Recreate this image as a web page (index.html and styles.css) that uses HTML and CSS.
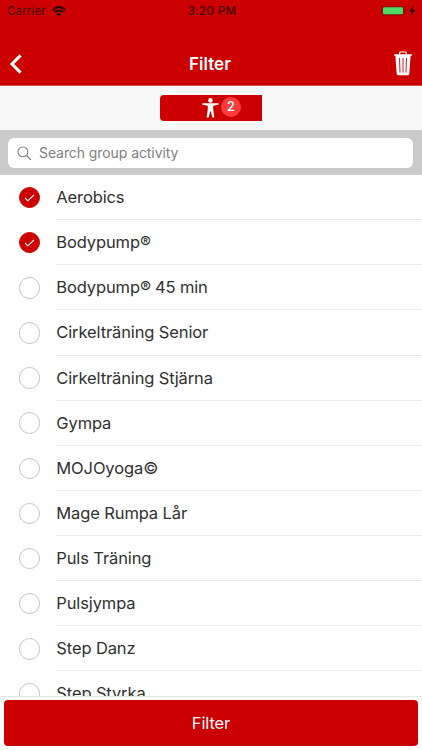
FILE: index.html
```html
<!DOCTYPE html>
<html lang="sv">
<head>
<meta charset="utf-8">
<title>Filter</title>
<link rel="stylesheet" href="styles.css">
</head>
<body>
<div class="app">
  <header class="header">
    <div class="status">
      <div class="carrier"><span>Carrier</span>
        <svg class="wifi" width="14" height="11" viewBox="0 0 14 11"><path d="M.8 4Q7-2 13.2 4M3 6.300Q7 2.600 11 6.300" fill="none" stroke="currentColor" stroke-width="1.900"/><path d="M4.700 8.100Q7 6 9.300 8.100L7 10.500Z" fill="currentColor"/></svg>
      </div>
      <time class="clock">3:20 PM</time>
      <svg class="battery" width="36" height="12" viewBox="0 0 36 12"><rect x=".5" y="1" width="23" height="9.600" rx="2.200" fill="#8b0d04"/><rect x="2" y="2.300" width="20" height="7" rx="1" fill="#4cd964"/><path d="M24.600 4.200Q26 5.800 24.600 7.400Z" fill="#700"/><path d="M32.300.7 28.500 6.500H31L30 10.800 34.300 4.900H31.600Z" fill="#210000"/></svg>
    </div>
    <nav class="nav">
      <svg class="back" width="14" height="22" viewBox="0 0 14 22"><path d="M11.600 2.400 3 11 11.600 19.600" fill="none" stroke="#fff" stroke-width="3"/></svg>
      <h1>Filter</h1>
      <svg class="trash" width="18" height="25" viewBox="0 0 18 25"><path d="M5.600 3.500V2Q5.600 1 6.600 1H11.400Q12.400 1 12.400 2V3.500" fill="none" stroke="#fff" stroke-width="1.200"/><path d="M.2 3.300H17.800V4.700H16.600L15.300 23Q15.200 24.300 13.800 24.300H4.200Q2.800 24.300 2.700 23L1.400 4.700H.2Z" fill="#fff"/><path d="M5.500 7 6 21.500M9 7V21.500M12.500 7 12 21.500" stroke="#c00" stroke-width=".9"/></svg>
    </nav>
  </header>
  <section class="segments">
    <div class="segment">
      <svg width="17" height="20" viewBox="0 0 17 20"><circle cx="8.500" cy="2.400" r="2.300" fill="#fff"/><path d="M.4 5.200H16.600V6.800L11.200 7.700V11L12.400 19.400H10.300L8.900 13.500H8.100L6.700 19.400H4.600L5.800 11V7.700L.4 6.800Z" fill="#fff"/></svg>
      <span class="badge">2</span>
    </div>
  </section>
  <section class="search">
    <div class="field">
      <svg width="15" height="15" viewBox="0 0 15 15"><circle cx="5.900" cy="5.900" r="4.900" fill="none" stroke="#808080" stroke-width="1.100"/><path d="M9.500 9.500 13.900 13.900" stroke="#808080" stroke-width="1.300"/></svg>
      <span>Search group activity</span>
    </div>
  </section>
  <ul class="list">
    <li><i class="check on"><svg width="11" height="8" viewBox="0 0 11 8"><path d="M1 4 3.800 6.800 10 1" fill="none" stroke="#fff" stroke-width="1.100"/></svg></i><span>Aerobics</span></li>
    <li><i class="check on"><svg width="11" height="8" viewBox="0 0 11 8"><path d="M1 4 3.800 6.800 10 1" fill="none" stroke="#fff" stroke-width="1.100"/></svg></i><span>Bodypump<b class="reg">®</b></span></li>
    <li><i class="check"></i><span>Bodypump<b class="reg">®</b> 45 min</span></li>
    <li><i class="check"></i><span>Cirkelträning Senior</span></li>
    <li><i class="check"></i><span>Cirkelträning Stjärna</span></li>
    <li><i class="check"></i><span>Gympa</span></li>
    <li><i class="check"></i><span>MOJOyoga<b class="copy">©</b></span></li>
    <li><i class="check"></i><span>Mage Rumpa Lår</span></li>
    <li><i class="check"></i><span>Puls Träning</span></li>
    <li><i class="check"></i><span>Pulsjympa</span></li>
    <li><i class="check"></i><span>Step Danz</span></li>
    <li><i class="check"></i><span>Step Styrka</span></li>
  </ul>
  <footer class="footer"><div class="apply">Filter</div></footer>
</div>
</body>
</html>
```
FILE: styles.css
```css
* { box-sizing: border-box; }
body { margin: 0; font-family: Inter, "Liberation Sans", sans-serif; color: #303030; background: #fff; }
svg { display: block; flex: none; }
.app { width: 422px; height: 750px; display: flex; flex-direction: column; overflow: hidden; }
.header { flex: none; height: 86px; background: #c00; border-bottom: 1px solid #d6504e; }
.status { height: 22px; padding: 0 5px 0 7px; display: grid; grid-template-columns: 1fr auto 1fr; align-items: center; color: #3b0000; font-size: 11.5px; }
.carrier { display: flex; align-items: center; gap: 6px; letter-spacing: .15px; }
.wifi { color: #210000; }
.clock { font-weight: 500; letter-spacing: .35px; }
.battery { justify-self: end; }
.nav { height: 63px; padding: 20px 10px 0 8px; display: grid; grid-template-columns: 1fr auto 1fr; align-items: center; }
.back { margin-left: 1px; }
.nav h1 { margin: 0; color: #fff; font-size: 17px; font-weight: 600; letter-spacing: 0; line-height: 22px; }
.trash { justify-self: end; }
.segments { flex: none; height: 44px; background: #f8f8f8; display: flex; justify-content: center; align-items: center; }
.segment { width: 102px; height: 26px; border-radius: 4px 0 0 4px; background: #c00; display: flex; justify-content: center; align-items: center; gap: 2px; padding-left: 21px; }
.badge { width: 20px; height: 20px; margin-top: -3px; border-radius: 50%; background: #fa3c3c; color: #fff; font-size: 12.5px; font-weight: 600; line-height: 20px; text-align: center; }
.search { flex: none; height: 45px; padding: 8px 9px 7px 8px; background: #cacaca; }
.field { height: 30px; border-radius: 6px; background: #fff; display: flex; align-items: center; gap: 7px; padding: 0 9px; color: #808080; font-size: 14px; letter-spacing: -.08px; line-height: 18px; }
.field span { padding-bottom: 1px; }
.list { flex: none; height: 521px; margin: 0; padding: 0; list-style: none; overflow: hidden; }
.list li { height: 45.14px; padding-left: 18.5px; display: flex; align-items: stretch; gap: 16px; font-size: 16.5px; letter-spacing: -.12px; line-height: 44px; }
.list span { flex: 1; padding-left: .3px; border-bottom: 1px solid #ebebeb; white-space: nowrap; }
.check { flex: none; align-self: center; width: 21.5px; height: 21.5px; border: 1px solid #c4c4c4; border-radius: 50%; display: flex; align-items: center; justify-content: center; }
.check.on { background: #c00; border-color: #c00; }
.reg, .copy { font-weight: 400; line-height: 1; letter-spacing: -.6px; }
.footer { flex: none; height: 54px; border-top: 1px solid #e6e6e6; background: #fff; padding: 3px 4px 4px; }
.apply { height: 45.5px; border-radius: 4px; background: #c00; color: #fff; text-align: center; font-size: 16.5px; line-height: 46px; letter-spacing: -.1px; }
```
